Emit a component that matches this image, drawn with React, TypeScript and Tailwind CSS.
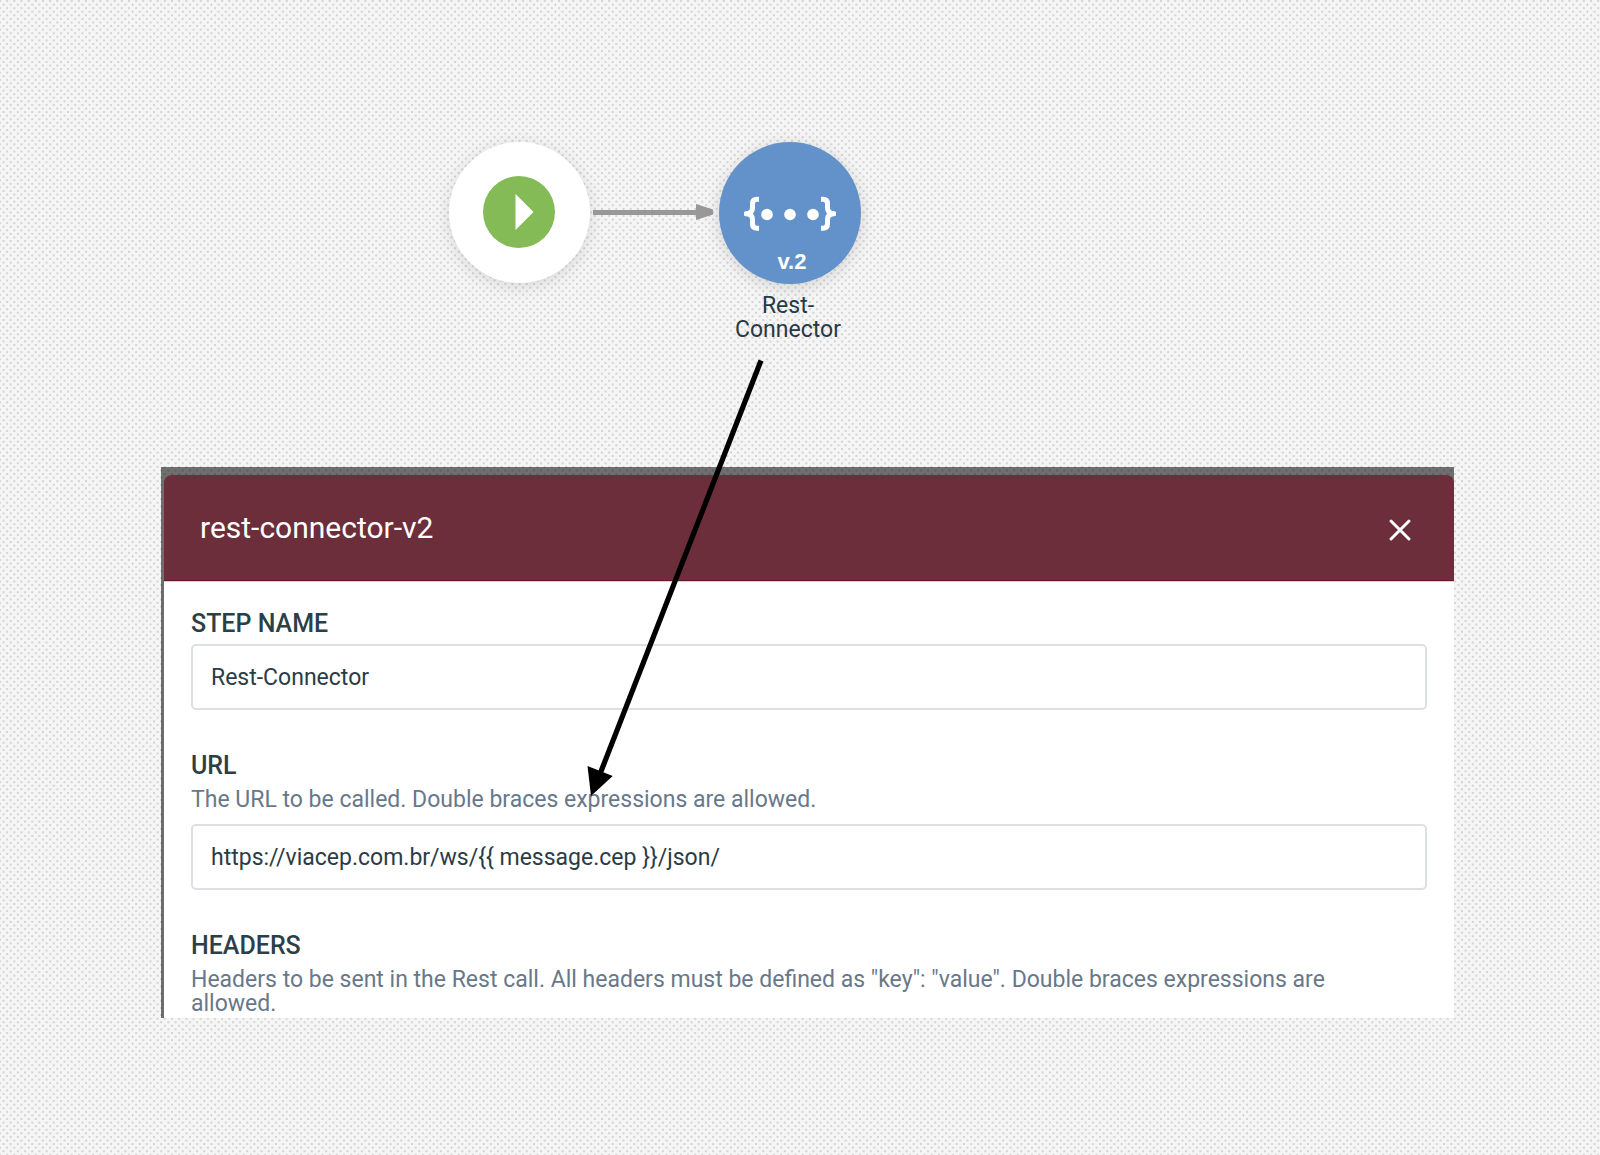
import { X } from "lucide-react";

const DOT_STEPS = [0, 1, 2, 3, 4, 5, 6];
const DOT_PITCH = 43 / 6;

function DottedBackdrop() {
  return (
    <svg className="absolute inset-0 h-full w-full" aria-hidden="true">
      <defs>
        <pattern id="dots" width="43" height="43" patternUnits="userSpaceOnUse">
          {DOT_STEPS.map((row) =>
            DOT_STEPS.map((col) => (
              <g key={`${row}-${col}`} fill="#d3d3d3">
                <rect x={col * DOT_PITCH - 1} y={row * DOT_PITCH} width="2" height="2" />
                <rect x={(col + 0.5) * DOT_PITCH - 1} y={(row + 0.5) * DOT_PITCH} width="2" height="2" />
              </g>
            ))
          )}
        </pattern>
      </defs>
      <rect width="100%" height="100%" fill="url(#dots)" />
    </svg>
  );
}

function Flow() {
  return (
    <div className="flex items-start pt-[142px] pl-[449px]">
      <button
        type="button"
        aria-label="Start"
        className="flex size-[141px] items-center justify-center rounded-full bg-white shadow-[0_3px_16px_rgba(0,0,0,0.12)]"
      >
        <svg width="74" height="74" viewBox="0 0 74 74" aria-hidden="true">
          <circle cx="36" cy="36" r="36" fill="#85bb56" />
          <path d="M32.500 18 L50.500 36 L32.500 54 Z" fill="#fff" />
        </svg>
      </button>
      <svg className="mt-[62px] ml-[3px]" width="120" height="16" viewBox="0 0 120 16" aria-hidden="true">
        <path d="M0 6 H103 V0 L120 5.5 V10.5 L103 16 V11 H0 Z" fill="#989898" />
      </svg>
      <div className="ml-[6px] flex w-[142px] flex-col items-center">
        <button
          type="button"
          aria-label="Rest-Connector step, v.2"
          className="flex size-[142px] flex-col items-center rounded-full bg-[#6292c9] pt-[54px] shadow-[0_3px_16px_rgba(0,0,0,0.14)]"
        >
          <svg width="92" height="36" viewBox="0 0 92 36" aria-hidden="true">
            <g fill="none" stroke="#fff" strokeWidth="5" strokeLinejoin="round">
              <path d="M15 3.2 H13 C10 3.2 8.500 4.700 8.500 7.700 V12 C8.500 15.500 6.500 17.500 2 17.800 C6.500 18 8.500 20 8.500 23.500 V27.800 C8.500 30.800 10 32.300 13 32.300 H15" />
              <path d="M77 3.2 H79 C82 3.200 83.500 4.700 83.500 7.700 V12 C83.500 15.500 85.500 17.500 90 17.800 C85.500 18 83.500 20 83.500 23.500 V27.800 C83.500 30.800 82 32.300 79 32.300 H77" />
            </g>
            <g fill="#fff">
              <circle cx="23" cy="18.500" r="5.800" />
              <circle cx="46" cy="18.500" r="5.800" />
              <circle cx="69" cy="18.500" r="5.800" />
            </g>
          </svg>
          <span className="mt-[18px] pl-1 font-['Liberation_Sans',sans-serif] text-[22px] leading-6 font-bold text-white">
            v.2
          </span>
        </button>
        <p className="mt-[10px] pr-1 text-center text-[23px] leading-6 text-[#263a45]">
          Rest-
          <br />
          Connector
        </p>
      </div>
    </div>
  );
}

type FieldProps = { id: string; label: string; hint?: string; value: string };

function Field({ id, label, hint, value }: FieldProps) {
  return (
    <div className="flex flex-col">
      <label htmlFor={id} className="text-[25px] leading-8 font-medium text-[#2c3f49]">
        {label}
      </label>
      {hint && <p className="mt-[6px] mb-2 pr-5 text-[23px] leading-6 text-[#68788a]">{hint}</p>}
      <input
        id={id}
        type="text"
        defaultValue={value}
        className="mt-1 h-[66px] w-full rounded-[5px] border-2 border-[#dcdfe3] bg-white px-[18px] text-[23px] text-[#2a3c46] outline-none"
      />
    </div>
  );
}

function StepDialog() {
  return (
    <section
      aria-labelledby="dialog-title"
      className="mt-[125px] mr-[146px] ml-[161px] bg-black/55 pt-2 pl-[3px]"
    >
      <header className="flex h-[106px] items-center justify-between rounded-t-lg border-b border-[#611b2b] bg-[#6c2e3a] pr-9 pl-9">
        <h1 id="dialog-title" className="text-[30px] leading-9 text-white">
          rest-connector-v2
        </h1>
        <button type="button" aria-label="Close" className="mt-1 text-white">
          <X size={36} strokeWidth={2} />
        </button>
      </header>
      <div className="flex flex-col gap-10 border-t border-[#d8cdd0] bg-white px-[27px] pt-[26px] pb-[2px]">
        <Field id="step-name" label="STEP NAME" value="Rest-Connector" />
        <Field
          id="url"
          label="URL"
          hint="The URL to be called. Double braces expressions are allowed."
          value="https://viacep.com.br/ws/{{ message.cep }}/json/"
        />
        <div>
          <h2 className="text-[25px] leading-8 font-medium text-[#2c3f49]">HEADERS</h2>
          <p className="mt-[6px] pr-5 text-[23px] leading-6 text-[#68788a]">
            Headers to be sent in the Rest call. All headers must be defined as "key": "value". Double braces expressions are allowed.
          </p>
        </div>
      </div>
    </section>
  );
}

function PointerArrow() {
  return (
    <svg
      className="pointer-events-none absolute top-[350px] left-[580px]"
      width="200"
      height="460"
      viewBox="0 0 200 460"
      aria-hidden="true"
    >
      <path d="M181 10.500 L20 424" stroke="#000" strokeWidth="5.200" />
      <path d="M7.500 416 L32.700 426 L11 446 Z" fill="#000" />
    </svg>
  );
}

export default function App() {
  return (
    <main className="relative min-h-screen bg-[#f5f5f5] font-[Roboto,sans-serif]">
      <DottedBackdrop />
      <div className="relative">
        <Flow />
        <StepDialog />
        <PointerArrow />
      </div>
    </main>
  );
}
